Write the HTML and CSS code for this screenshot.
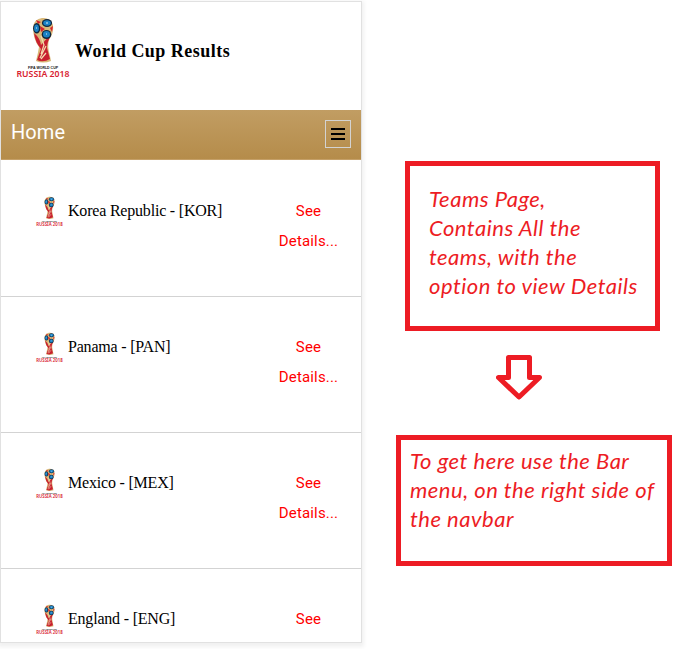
FILE: index.html
```
<!DOCTYPE html>
<html lang="en">
<head>
<meta charset="utf-8">
<title>World Cup Results</title>
<link rel="stylesheet" href="styles.css">
</head>
<body>
<svg class="defs" width="0" height="0" aria-hidden="true">
  <symbol id="logo" viewBox="0 0 54 61" overflow="visible">
    <path d="M17 10Q18 2 26 1Q34 0 37 8Q38 16 33 23Q31 29 34 39L35 44Q27 47 20 44Q22 36 23 30Q17 22 17 10Z" fill="#d9b878"/>
    <path d="M18 16Q24 21 25 28Q29 23 35 18Q31 25 31 31L34 42Q27 46 21 43L25 32Q19 25 18 16Z" fill="#c8202f"/>
    <path d="M20 3L25 5L22 7ZM24 9L29 12L25 15ZM34 11L37 9L36 15Z" fill="#d8232a"/>
    <path d="M25 19L28 28L25 37M30 29L26 37L24 41M30 36L25 42" fill="none" stroke="#f5dcb0" stroke-width="1.2"/>
    <ellipse cx="31" cy="6" rx="5.1" ry="4" fill="#10263d"/>
    <ellipse cx="20.7" cy="11.3" rx="3.6" ry="5.2" fill="#10263d"/>
    <ellipse cx="30.5" cy="17.5" rx="4.8" ry="4.5" fill="#10263d"/>
    <ellipse cx="31" cy="6" rx="3.8" ry="2.8" fill="#1b82c4"/>
    <ellipse cx="20.5" cy="11.3" rx="2.4" ry="3.8" fill="#1b82c4"/>
    <ellipse cx="30.5" cy="17.3" rx="3.5" ry="3.2" fill="#1b82c4"/>
    <path d="M30 6h2M20 11h1M30 17h1" stroke="#d6edf7"/>
    <text class="logo-small" x="12" y="51.500" textLength="30" lengthAdjust="spacingAndGlyphs">FIFA WORLD CUP</text>
    <text class="logo-big" x="0.5" y="59.600" textLength="53" lengthAdjust="spacingAndGlyphs">RUSSIA 2018</text>
  </symbol>
</svg>
<div class="page">
  <main class="phone">
    <header class="header">
      <svg class="logo"><use href="#logo"/></svg>
      <h1>World Cup Results</h1>
    </header>
    <nav class="navbar">
      <span class="brand">Home</span>
      <button class="toggle" aria-label="Menu"><i></i><i></i><i></i></button>
    </nav>
    <div class="row first"><svg class="mini"><use href="#logo"/></svg><span class="team">Korea Republic - [KOR]</span><a class="details">See<br>Details...</a></div>
    <div class="row"><svg class="mini"><use href="#logo"/></svg><span class="team">Panama - [PAN]</span><a class="details">See<br>Details...</a></div>
    <div class="row"><svg class="mini"><use href="#logo"/></svg><span class="team">Mexico - [MEX]</span><a class="details">See<br>Details...</a></div>
    <div class="row"><svg class="mini"><use href="#logo"/></svg><span class="team">England - [ENG]</span><a class="details">See</a></div>
  </main>
  <aside class="notes">
    <p class="note note-teams">Teams Page,<br>Contains All the<br>teams, with the<br><span class="tight">option to view Details</span></p>
    <svg class="arrow" width="46" height="46" viewBox="0 0 46 46"><path d="M12.500 2.500H33.500V22.500H43.500L23 42L2.500 22.500H12.500Z"/></svg>
    <p class="note note-menu">To get here use the Bar<br>menu, on the right side of<br>the navbar</p>
  </aside>
</div>
</body>
</html>
```
FILE: styles.css
```
* { box-sizing: border-box; }
body { margin: 0; background: #fff; overflow: hidden; }
.defs { display: block; }
.page { display: flex; align-items: flex-start; height: 649px; overflow: hidden; }
.phone {
  width: 362px;
  height: 642px;
  margin-top: 1px;
  flex: none;
  overflow: hidden;
  border: 1px solid #e1e1e1;
  background: #fff;
  box-shadow: 0 2px 4px 2px #f1f1f1;
}
.header { display: flex; height: 108px; padding: 15px 0 0 15px; }
.logo { width: 54px; height: 61px; flex: none; overflow: visible; }
.logo-small { font: bold 3.800px "Liberation Sans", sans-serif; fill: #111; }
.logo-big { font: 600 9.600px "Noto Sans", sans-serif; fill: #d8202f; }
h1 {
  margin: 22px 0 0 5px;
  font: bold 18px/24px "Liberation Serif", serif;
  letter-spacing: 0.48px;
  color: #000;
  white-space: nowrap;
}
.navbar {
  display: flex;
  justify-content: space-between;
  align-items: flex-start;
  height: 50px;
  padding: 10px 10px 0;
  background: linear-gradient(#c19d63, #b58c4a);
  border-bottom: 1px solid #c5a068;
}
.brand { font: 20px/25px Roboto, sans-serif; letter-spacing: 0.1px; color: #fff; }
.toggle {
  display: flex;
  flex-direction: column;
  align-items: center;
  gap: 3px;
  width: 26px;
  height: 28px;
  padding: 7px 0 0;
  border: 1px solid #d3d3d3;
  background: none;
}
.toggle i { width: 14px; height: 2px; background: #000; }
.row {
  display: flex;
  align-items: flex-start;
  height: 136px;
  padding: 35px 0 0 35px;
  border-bottom: 1px solid #d3d3d3;
}
.first { height: 137px; padding-top: 36px; }
.mini { width: 27px; height: 31px; flex: none; overflow: visible; }
.team {
  width: 206px;
  margin-left: 5px;
  font: 16px/30px "Liberation Serif", serif;
  letter-spacing: -0.2px;
  color: #000;
  white-space: nowrap;
}
.details {
  width: 69px;
  font: 15px/30px Roboto, sans-serif;
  letter-spacing: 0.15px;
  text-align: center;
  color: #f00;
}
.notes { width: 276px; margin: 161px 0 0 34px; flex: none; }
.note {
  margin: 0;
  border: 5px solid #ed1c24;
  font: italic 22px/29px Lato, sans-serif;
  font-variant-ligatures: none;
  letter-spacing: 0.5px;
  color: #ed1c24;
  white-space: nowrap;
}
.note-teams { width: 255px; height: 170px; margin-left: 9px; padding: 18px 0 0 19px; }
.arrow { display: block; margin: 24px 0 34px 100px; }
.arrow path { fill: none; stroke: #ed1c24; stroke-width: 5; stroke-linejoin: round; }
.note-menu { width: 276px; height: 131px; padding: 6px 0 0 9px; }
```
